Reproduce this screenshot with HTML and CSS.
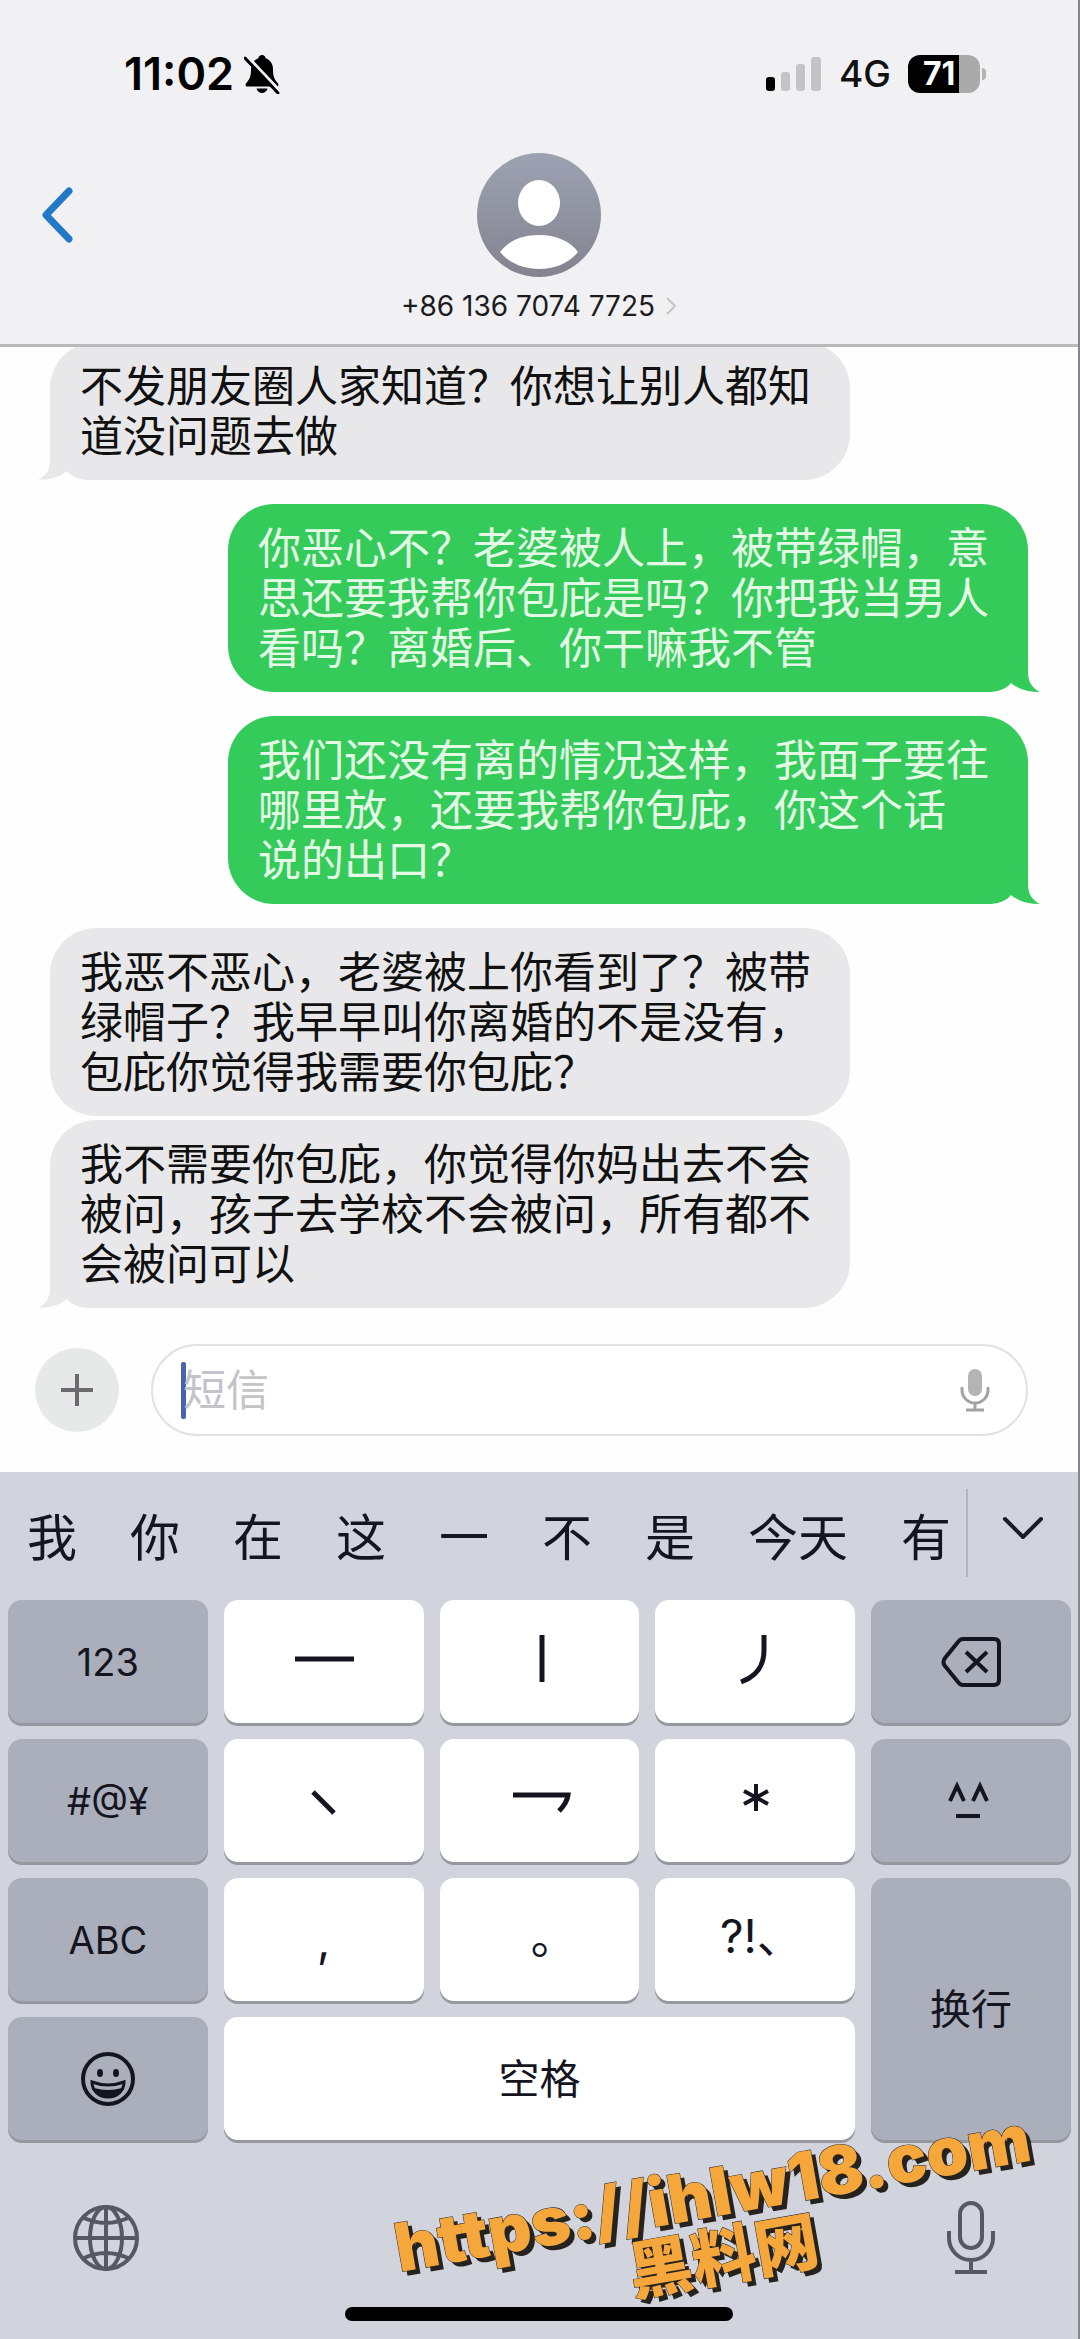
FILE: index.html
```html
<!DOCTYPE html>
<html lang="zh-CN">
<head>
    <meta charset="utf-8">
    <meta name="viewport" content="width=device-width, initial-scale=1">
    <title>短信</title>
    <link rel="stylesheet" href="styles.css">
</head>
<body>
    <header class="header">
        <div class="status-bar">
            <div class="status-left">
                <span class="time">11:02</span>
                <svg class="bell" width="36" height="40" viewBox="0 0 36 40">
                    <path d="M18 1c-2 0-3.500 1.300-3.700 3.200C9.500 6 7 10 7 15c0 7-1 10-5 14.500-1 1.500-.5 3 1.500 3h29c2 0 2.500-1.500 1.500-3C30 25 29 22 29 15c0-5-2.500-9-7.300-10.800C21.500 2.300 20 1 18 1zM12.500 34.500c.8 2.800 2.800 4.500 5.500 4.500s4.700-1.700 5.500-4.500z" fill="#000"/>
                    <path d="M3 2l33 35" stroke="#f1f1f3" stroke-width="3"/>
                    <path d="M1 4l33 35" stroke="#000" stroke-width="3" stroke-linecap="round"/>
                </svg>
            </div>
            <div class="status-right">
                <svg width="57" height="36" viewBox="0 0 57 36">
                    <rect x="1" y="21" width="9" height="14" rx="3" fill="#000"/>
                    <rect x="16" y="16" width="9" height="19" rx="3" fill="#c4c4c6"/>
                    <rect x="31" y="8" width="9" height="27" rx="3" fill="#c4c4c6"/>
                    <rect x="46" y="1" width="10" height="34" rx="3" fill="#c4c4c6"/>
                </svg>
                <span class="network">4G</span>
                <span class="battery">71</span>
            </div>
        </div>
        <div class="contact-bar">
            <button class="back" aria-label="返回">
                <svg width="34" height="58" viewBox="0 0 34 58"><path d="M29 5L6 29l23 24" fill="none" stroke="#2478c8" stroke-width="7" stroke-linecap="round" stroke-linejoin="round"/></svg>
            </button>
            <div class="contact">
                <svg width="126" height="126" viewBox="0 0 126 126">
                    <defs>
                        <linearGradient id="avatar" x1="0" y1="0" x2="0" y2="1">
                            <stop offset="0" stop-color="#9da2b2"/>
                            <stop offset="1" stop-color="#83838f"/>
                        </linearGradient>
                    </defs>
                    <circle cx="63" cy="63" r="62" fill="url(#avatar)"/>
                    <ellipse cx="63" cy="51" rx="21" ry="23" fill="#fff"/>
                    <path d="M24 100c8-11 22-17 39-17s31 6 39 17c-9 11-23 17-39 17s-30-6-39-17z" fill="#fff"/>
                </svg>
                <a class="number" href="#">+86 136 7074 7725
                    <svg width="12" height="20" viewBox="0 0 12 20"><path d="M2 2l8 8-8 8" fill="none" stroke="#c3c3c6" stroke-width="2"/></svg>
                </a>
            </div>
        </div>
    </header>

    <main class="messages">
        <div class="bubble received">不发朋友圈人家知道？你想让别人都知道没问题去做
            <svg class="tail" width="60" height="48" viewBox="0 0 60 48"><path d="M12 0v28C12 38 8 44 0 48c12 0 22-3 29-9 4 5 10 8 20 9h11V0z"/></svg>
        </div>
        <div class="bubble sent">你恶心不？老婆被人上，被带绿帽，意思还要我帮你包庇是吗？你把我当男人看吗？离婚后、你干嘛我不管
            <svg class="tail" width="60" height="48" viewBox="0 0 60 48"><path d="M12 0v28C12 38 8 44 0 48c12 0 22-3 29-9 4 5 10 8 20 9h11V0z"/></svg>
        </div>
        <div class="bubble sent">我们还没有离的情况这样，我面子要往哪里放，还要我帮你包庇，你这个话<br>说的出口？
            <svg class="tail" width="60" height="48" viewBox="0 0 60 48"><path d="M12 0v28C12 38 8 44 0 48c12 0 22-3 29-9 4 5 10 8 20 9h11V0z"/></svg>
        </div>
        <div class="bubble received">我恶不恶心，老婆被上你看到了？被带绿帽子？我早早叫你离婚的不是没有，包庇你觉得我需要你包庇？</div>
        <div class="bubble received follow">我不需要你包庇，你觉得你妈出去不会被问，孩子去学校不会被问，所有都不会被问可以
            <svg class="tail" width="60" height="48" viewBox="0 0 60 48"><path d="M12 0v28C12 38 8 44 0 48c12 0 22-3 29-9 4 5 10 8 20 9h11V0z"/></svg>
        </div>
    </main>

    <form class="composer">
        <button class="add" type="button" aria-label="添加">
            <svg width="34" height="34" viewBox="0 0 34 34"><path d="M17 1v32M1 17h32" stroke="#6b6b6d" stroke-width="4"/></svg>
        </button>
        <div class="field">
            <span class="caret"></span>
            <input type="text" placeholder="短信" aria-label="短信">
            <svg width="30" height="44" viewBox="0 0 30 44">
                <rect x="8" y="1" width="14" height="27" rx="7" fill="#b4b4b6"/>
                <path d="M2 19v3a13 13 0 0 0 26 0v-3M15 35v7M6 42h18" fill="none" stroke="#a3a3a5" stroke-width="3"/>
            </svg>
        </div>
    </form>

    <section class="keyboard">
        <div class="candidates">
            <div class="words">
                <button>我</button>
                <button>你</button>
                <button>在</button>
                <button>这</button>
                <button>一</button>
                <button>不</button>
                <button>是</button>
                <button>今天</button>
                <button>有</button>
            </div>
            <button class="expand" aria-label="展开">
                <svg width="44" height="26" viewBox="0 0 44 26"><path d="M4 3l18 18L40 3" fill="none" stroke="#1b1c28" stroke-width="4" stroke-linecap="round" stroke-linejoin="round"/></svg>
            </button>
        </div>

        <div class="keys">
            <button class="key dark">123</button>
            <button class="key" aria-label="横"><svg viewBox="-40 -40 80 80"><path d="M-29-3h59" stroke-width="5"/></svg></button>
            <button class="key" aria-label="竖"><svg viewBox="-40 -40 80 80"><path d="M3-27v47" stroke-width="5"/></svg></button>
            <button class="key" aria-label="撇"><svg viewBox="-40 -40 80 80"><path d="M9-27v15C9 4 2 14-14 20" stroke-width="5"/></svg></button>
            <button class="key dark" aria-label="删除"><svg viewBox="-40 -40 80 80"><path d="M-8-23h31q5 0 5 5v36q0 5-5 5H-8q-3 0-5-3L-26 4q-3-4 0-8l13-16q2-3 5-3zM-5-10l21 20M16-10L-5 10" stroke-width="4" stroke-linejoin="round"/></svg></button>

            <button class="key dark">#@¥</button>
            <button class="key" aria-label="点"><svg viewBox="-40 -40 80 80"><path d="M-11-9L10 12" stroke-width="5"/></svg></button>
            <button class="key" aria-label="折"><svg viewBox="-40 -40 80 80"><path d="M-26-6H29Q28 2 20 10" stroke-width="5"/></svg></button>
            <button class="key" aria-label="通配"><svg viewBox="-40 -40 80 80"><path d="M1-17v27M-11-10L13 3M13-10L-11 3" stroke-width="4"/></svg></button>
            <button class="key dark" aria-label="颜文字"><svg viewBox="-40 -40 80 80"><path d="M-21 0l7-15 7 15M2 0l7-15 7 15" stroke-width="4"/><path d="M-15 15H9" stroke-width="4"/></svg></button>

            <button class="key dark">ABC</button>
            <button class="key punct">,</button>
            <button class="key punct stop">。</button>
            <button class="key punct marks">?!、</button>
            <button class="key dark enter">换行</button>

            <button class="key dark" aria-label="表情">
                <svg viewBox="-40 -40 80 80">
                    <circle r="25" stroke-width="4"/>
                    <path d="M-16 3Q0 9 16 3C16 12 9 18 0 18S-16 12-16 3z" stroke-width="3"/>
                    <path d="M-14 9Q0 13 14 9C12 15 7 18 0 18S-12 15-14 9z" fill="#14151f" stroke="none"/>
                    <ellipse cx="-8" cy="-6" rx="3" ry="4" fill="#14151f" stroke="none"/>
                    <ellipse cx="8" cy="-6" rx="3" ry="4" fill="#14151f" stroke="none"/>
                </svg>
            </button>
            <button class="key space">空格</button>
        </div>

        <div class="bottom-bar">
            <button aria-label="切换键盘">
                <svg width="68" height="68" viewBox="-34 -34 68 68" fill="none" stroke="#565962" stroke-width="4">
                    <circle r="31"/>
                    <ellipse rx="16" ry="31"/>
                    <path d="M0-31v62M-31 0h62M-24-21Q0-9 24-21M-24 21Q0 9 24 21"/>
                </svg>
            </button>
            <button aria-label="听写">
                <svg width="50" height="74" viewBox="0 0 50 74" fill="none" stroke="#565962" stroke-width="4">
                    <rect x="14" y="2" width="22" height="45" rx="11"/>
                    <path d="M3 30v7a22 22 0 0 0 44 0v-7M25 59v12M9 71h32"/>
                </svg>
            </button>
        </div>
        <div class="home-indicator"></div>
        <div class="watermark">https://ihlw18.com<br><span class="site-name">黑料网</span></div>
    </section>
</body>
</html>
```
FILE: styles.css
```css
* { box-sizing: border-box; }
body { margin: 0; min-height: 100vh; display: flex; flex-direction: column; background: #fefefe; border-right: 2px solid #85878d; font-family: Inter, "Noto Sans CJK SC", sans-serif; color: #111; overflow-x: hidden; }
button { border: 0; padding: 0; background: none; font: inherit; color: inherit; }
svg { display: block; }

.header { position: relative; z-index: 1; background: #f1f1f3; border-bottom: 3px solid #b9b9bb; padding-bottom: 21px; }
.status-bar { display: flex; justify-content: space-between; align-items: center; padding: 50px 98px 0 124px; height: 97px; }
.status-left { display: flex; align-items: center; gap: 10px; }
.time { font-size: 45px; line-height: 48px; font-weight: 600; color: #000; }
.status-right { display: flex; align-items: center; gap: 17px; }
.network { font-size: 37px; line-height: 48px; font-weight: 500; }
.battery { position: relative; width: 72px; height: 38px; border-radius: 12px; background: linear-gradient(90deg, #000 51px, #aaa 51px); color: #fff; font-size: 32px; line-height: 38px; font-weight: 700; padding-left: 15px; }
.battery::after { content: ""; position: absolute; right: -6px; top: 13px; width: 4px; height: 12px; border-radius: 0 4px 4px 0; background: #b4b4b6; }

.contact-bar { display: grid; grid-template-columns: 1fr auto 1fr; padding: 55px 40px 0; }
.back { justify-self: start; align-self: start; margin-top: 34px; }
.contact { display: flex; flex-direction: column; align-items: center; gap: 11px; }
.number { display: flex; align-items: center; gap: 10px; font-size: 28px; line-height: 34px; color: #1c1c1e; text-decoration: none; }

.messages { display: flex; flex-direction: column; align-items: flex-start; margin-top: -5px; padding: 0 50px; }
.bubble { position: relative; width: 82%; max-width: 800px; padding: 19px 30px; border-radius: 46px; font-size: 43px; line-height: 50px; }
.bubble + .bubble { margin-top: 24px; }
.bubble + .follow { margin-top: 4px; }
.received { background: #e8e8ea; }
.sent { align-self: flex-end; background: #34cb5b; color: #e4fae6; }
.tail { position: absolute; bottom: 0; left: -12px; z-index: -1; fill: #e8e8ea; }
.sent .tail { left: auto; right: -12px; transform: scaleX(-1); fill: #34cb5b; }

.composer { display: flex; align-items: center; gap: 32px; margin: 0; padding: 36px 50px 36px 35px; }
.add { display: flex; align-items: center; justify-content: center; width: 84px; height: 84px; border-radius: 50%; background: #e7e8e8; }
.field { flex: 1; display: flex; align-items: center; height: 92px; padding: 0 36px 0 28px; border: 2px solid #e2e2e0; border-radius: 46px; background: #fff; }
.field input { flex: 1; min-width: 0; height: 60px; border: 0; padding: 0; outline: 0; background: none; font: inherit; font-size: 43px; }
.field input::placeholder { color: #c3c4c9; opacity: 1; }
.caret { width: 5px; height: 57px; margin-right: -3px; border-radius: 2px; background: #4a62b0; }

.keyboard { position: relative; flex: 1; background: #d1d3dd; color: #14151f; }
.candidates { display: flex; align-items: center; height: 128px; }
.words { flex: 1; display: flex; gap: 53px; padding: 3px 0 0 27px; font-size: 50px; line-height: 60px; }
.words button { white-space: nowrap; }
.expand { display: flex; align-items: center; justify-content: center; width: 112px; height: 88px; margin-bottom: 6px; padding-bottom: 8px; border-left: 2px solid #b3b5be; }

.keys { display: grid; grid-template-columns: repeat(5, 1fr); grid-auto-rows: 123px; gap: 16px; padding: 0 7px 0 8px; }
.key { display: flex; align-items: center; justify-content: center; border-radius: 14px; background: #fff; box-shadow: 0 3px 0 #96989f; font-size: 38px; line-height: 48px; }
.key svg { width: 80px; height: 80px; fill: none; stroke: #14151f; }
.dark { background: #abafbc; }
.punct { font-size: 46px; }
.stop { font-family: "Noto Sans CJK TC", sans-serif; padding-top: 14px; }
.marks { padding: 0 0 8px 12px; }
.enter { grid-column: 5; grid-row: 3 / span 2; font-size: 41px; }
.space { grid-column: 2 / span 3; font-size: 41px; }

.bottom-bar { display: flex; justify-content: space-between; align-items: center; padding: 61px 82px 0 72px; }
.home-indicator { width: 36%; height: 14px; margin: 32px auto 20px; border-radius: 7px; background: #000; }
.watermark { position: absolute; right: 38px; bottom: 52px; text-align: center; white-space: nowrap; transform: rotate(-10deg); font-size: 67px; line-height: 64px; font-weight: 900; color: #f6a73c; text-shadow: 4px 5px 0 #26231f; -webkit-text-stroke: 1px #26231f; paint-order: stroke fill; }
.site-name { font-size: 64px; }
```
